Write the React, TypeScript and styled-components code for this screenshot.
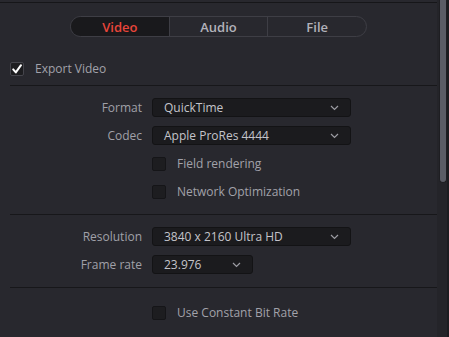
import React from "react"
import styled, { createGlobalStyle } from "styled-components"

const GlobalStyle = createGlobalStyle`
  html, body {
    margin: 0;
    padding: 0;
    background: #28282e;
    font-family: "Open Sans", "Noto Sans", "Liberation Sans", sans-serif;
  }
`

const Page = styled.div`
  display: flex;
  width: 449px;
  height: 337px;
  overflow: hidden;
  background: #28282e;
`

const Panel = styled.div`
  flex: 1;
  display: flex;
  flex-direction: column;
  padding-top: 2px;
`

const TopRule = styled.div`
  height: 1px;
  background: #161619;
`

const ScrollTrack = styled.div`
  width: 12px;
  display: flex;
  padding-left: 2px;
  box-sizing: border-box;
  background: #242429;
  border-right: 2px solid #1c1c20;
`

const ScrollThumb = styled.div`
  width: 8px;
  height: 183px;
  box-sizing: border-box;
  background: #5b5d66;
  border: 1px solid #1e1e22;
  border-top: none;
  border-radius: 0 0 4px 4px;
`

const Tabs = styled.div`
  align-self: center;
  margin-top: 13px;
  display: flex;
  width: 297px;
  height: 21px;
  box-sizing: border-box;
  border: 1px solid #3e3e45;
  border-radius: 11px;
  overflow: hidden;
`

const Tab = styled.div<{ $active?: boolean }>`
  flex: 1;
  display: flex;
  align-items: center;
  justify-content: center;
  font-size: 13px;
  font-weight: 600;
  color: ${(p) => (p.$active ? "#e8453a" : "#b2b2ba")};
  background: ${(p) => (p.$active ? "#19191c" : "transparent")};
  & + & {
    border-left: 1px solid #3e3e45;
  }
`

const CheckRow = styled.label<{ $indent?: number }>`
  display: flex;
  align-items: center;
  height: 19px;
  gap: 11px;
  padding-left: ${(p) => p.$indent ?? 0}px;
  font-size: 12px;
  color: #a2a2aa;
`

const Box = styled.span<{ $checked?: boolean }>`
  width: 14px;
  height: 14px;
  box-sizing: border-box;
  border-radius: 2px;
  background: #1d1d20;
  border: 1px solid ${(p) => (p.$checked ? "#45454c" : "#151518")};
  display: flex;
  align-items: center;
  justify-content: center;
`

const Separator = styled.div`
  height: 1px;
  margin-left: 10px;
  background: #17171a;
`

const Form = styled.div`
  display: grid;
  grid-template-columns: 142px 1fr;
  grid-auto-rows: 19px;
  column-gap: 10px;
  row-gap: 9px;
`

const Label = styled.div`
  display: flex;
  align-items: center;
  justify-content: flex-end;
  font-size: 12px;
  color: #a0a0a8;
`

const Select = styled.div<{ $width: number }>`
  width: ${(p) => p.$width}px;
  height: 19px;
  box-sizing: border-box;
  display: flex;
  align-items: center;
  justify-content: space-between;
  padding: 0 11px 0 11px;
  background: #1b1b1e;
  border: 1px solid #131315;
  border-radius: 3px;
  font-size: 12px;
  color: #c4c4ca;
`

function Chevron() {
  return (
    <svg width="9" height="6" viewBox="0 0 9 6">
      <polyline
        points="1,1 4.5,4.5 8,1"
        fill="none"
        stroke="#9c9ca3"
        strokeWidth="1.2"
      />
    </svg>
  )
}

function Dropdown({ value, width }: { value: string; width: number }) {
  return (
    <Select $width={width}>
      <span>{value}</span>
      <Chevron />
    </Select>
  )
}

function Check({ label, checked, indent }: { label: string; checked?: boolean; indent?: number }) {
  return (
    <CheckRow $indent={indent}>
      <Box $checked={checked}>
        {checked && (
          <svg width="12" height="12" viewBox="0 0 12 12">
            <polyline
              points="2.2,6.4 4.8,9.4 10,2.2"
              fill="none"
              stroke="#ffffff"
              strokeWidth="2"
              strokeLinecap="round"
              strokeLinejoin="round"
            />
          </svg>
        )}
      </Box>
      {label}
    </CheckRow>
  )
}

export default function App() {
  return (
    <Page>
      <GlobalStyle />
      <Panel>
        <TopRule />
        <Tabs>
          <Tab $active>Video</Tab>
          <Tab>Audio</Tab>
          <Tab>File</Tab>
        </Tabs>
        <div style={{ marginTop: 22 }}>
          <Check label="Export Video" checked indent={10} />
        </div>
        <div style={{ marginTop: 7 }}>
          <Separator />
        </div>
        <div style={{ marginTop: 12 }}>
          <Form>
            <Label>Format</Label>
            <Dropdown value="QuickTime" width={199} />
            <Label>Codec</Label>
            <Dropdown value="Apple ProRes 4444" width={199} />
            <span />
            <Check label="Field rendering" />
            <span />
            <Check label="Network Optimization" />
          </Form>
        </div>
        <div style={{ marginTop: 13 }}>
          <Separator />
        </div>
        <div style={{ marginTop: 12 }}>
          <Form>
            <Label>Resolution</Label>
            <Dropdown value="3840 x 2160 Ultra HD" width={199} />
            <Label>Frame rate</Label>
            <Dropdown value="23.976" width={101} />
          </Form>
        </div>
        <div style={{ marginTop: 13 }}>
          <Separator />
        </div>
        <div style={{ marginTop: 15 }}>
          <Check label="Use Constant Bit Rate" indent={152} />
        </div>
      </Panel>
      <ScrollTrack>
        <ScrollThumb />
      </ScrollTrack>
    </Page>
  )
}
